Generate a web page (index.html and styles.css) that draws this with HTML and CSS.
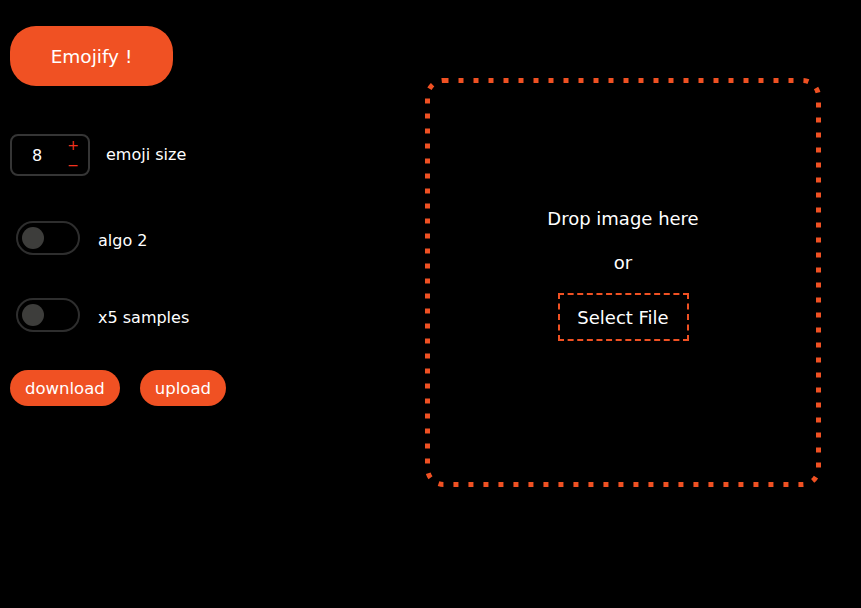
FILE: index.html
```html
<!DOCTYPE html>
<html>
<head>
<meta charset="utf-8">
<link rel="stylesheet" href="styles.css">
</head>
<body>
<div class="app">
  <div class="controls">
    <button class="emojify">Emojify !</button>
    <div class="row size-row">
      <div class="number">
        <span class="value">8</span>
        <div class="steps"><span class="plus">+</span><span class="minus">−</span></div>
      </div>
      <span class="label">emoji size</span>
    </div>
    <div class="row toggle-row first">
      <div class="toggle"><span class="knob"></span></div>
      <span class="label">algo 2</span>
    </div>
    <div class="row toggle-row">
      <div class="toggle"><span class="knob"></span></div>
      <span class="label">x5 samples</span>
    </div>
    <div class="row buttons">
      <button class="pill">download</button>
      <button class="pill">upload</button>
    </div>
  </div>
  <div class="dropzone">
    <p class="drop-text">Drop image here</p>
    <p class="or">or</p>
    <div class="select">Select File</div>
  </div>
</div>
</body>
</html>
```

FILE: styles.css
```css
html, body {
  margin: 0;
  background: #000;
  color: #fff;
  font-family: "DejaVu Sans", sans-serif;
}
.app {
  display: flex;
  align-items: flex-start;
}
.controls {
  width: 425px;
  padding: 26px 0 0 10px;
  box-sizing: border-box;
  display: flex;
  flex-direction: column;
  align-items: flex-start;
}
button {
  font-family: inherit;
  border: none;
  color: #fff;
  background: #f05123;
  cursor: pointer;
}
.emojify {
  width: 163px;
  height: 60px;
  border-radius: 26px;
  font-size: 18.5px;
}
.row {
  display: flex;
  align-items: center;
}
.label {
  font-size: 16px;
}
.size-row {
  margin-top: 48px;
}
.size-row .label {
  padding-bottom: 2px;
}
.number {
  width: 80px;
  height: 42px;
  box-sizing: border-box;
  border: 2px solid #353535;
  border-radius: 8px;
  display: flex;
  align-items: center;
  margin-right: 16px;
}
.value {
  font-size: 16px;
  margin-left: 20px;
}
.steps {
  display: flex;
  flex-direction: column;
  margin-left: auto;
  margin-right: 9px;
  color: #f0321e;
  font-size: 14px;
  height: 38px;
  justify-content: center;
}
.steps span { line-height: 20px; }
.toggle-row {
  margin-top: 43px;
  margin-left: 6px;
}
.toggle-row.first {
  margin-top: 45px;
}
.toggle-row .label {
  padding-top: 5px;
}
.toggle {
  width: 64px;
  height: 34px;
  box-sizing: border-box;
  border: 2px solid #2e2e2e;
  border-radius: 17px;
  display: flex;
  align-items: center;
  padding-left: 4px;
  margin-right: 18px;
}
.knob {
  width: 22px;
  height: 22px;
  border-radius: 50%;
  background: #3d3d3b;
}
.buttons {
  margin-top: 38px;
  gap: 20px;
}
.pill {
  height: 36px;
  border-radius: 18px;
  font-size: 16.5px;
  padding: 0 15px;
}
.dropzone {
  margin-top: 78px;
  width: 396px;
  height: 409px;
  box-sizing: border-box;
  background-image: url("data:image/svg+xml,%3csvg width='396' height='409' xmlns='http://www.w3.org/2000/svg'%3e%3crect x='2.5' y='2.5' width='391' height='404' fill='none' rx='16' ry='16' stroke='%23F05123' stroke-width='5' stroke-dasharray='5 10' stroke-linecap='butt'/%3e%3c/svg%3e");
  display: flex;
  flex-direction: column;
  align-items: center;
  padding-top: 129px;
}
.drop-text {
  margin: 0;
  font-size: 18px;
  line-height: 24px;
}
.or {
  margin: 20px 0 0;
  font-size: 18px;
  line-height: 24px;
}
.select {
  margin-top: 18px;
  width: 131px;
  height: 48px;
  box-sizing: border-box;
  border: 2px dashed #f05123;
  display: flex;
  align-items: center;
  justify-content: center;
  font-size: 18px;
}
```
